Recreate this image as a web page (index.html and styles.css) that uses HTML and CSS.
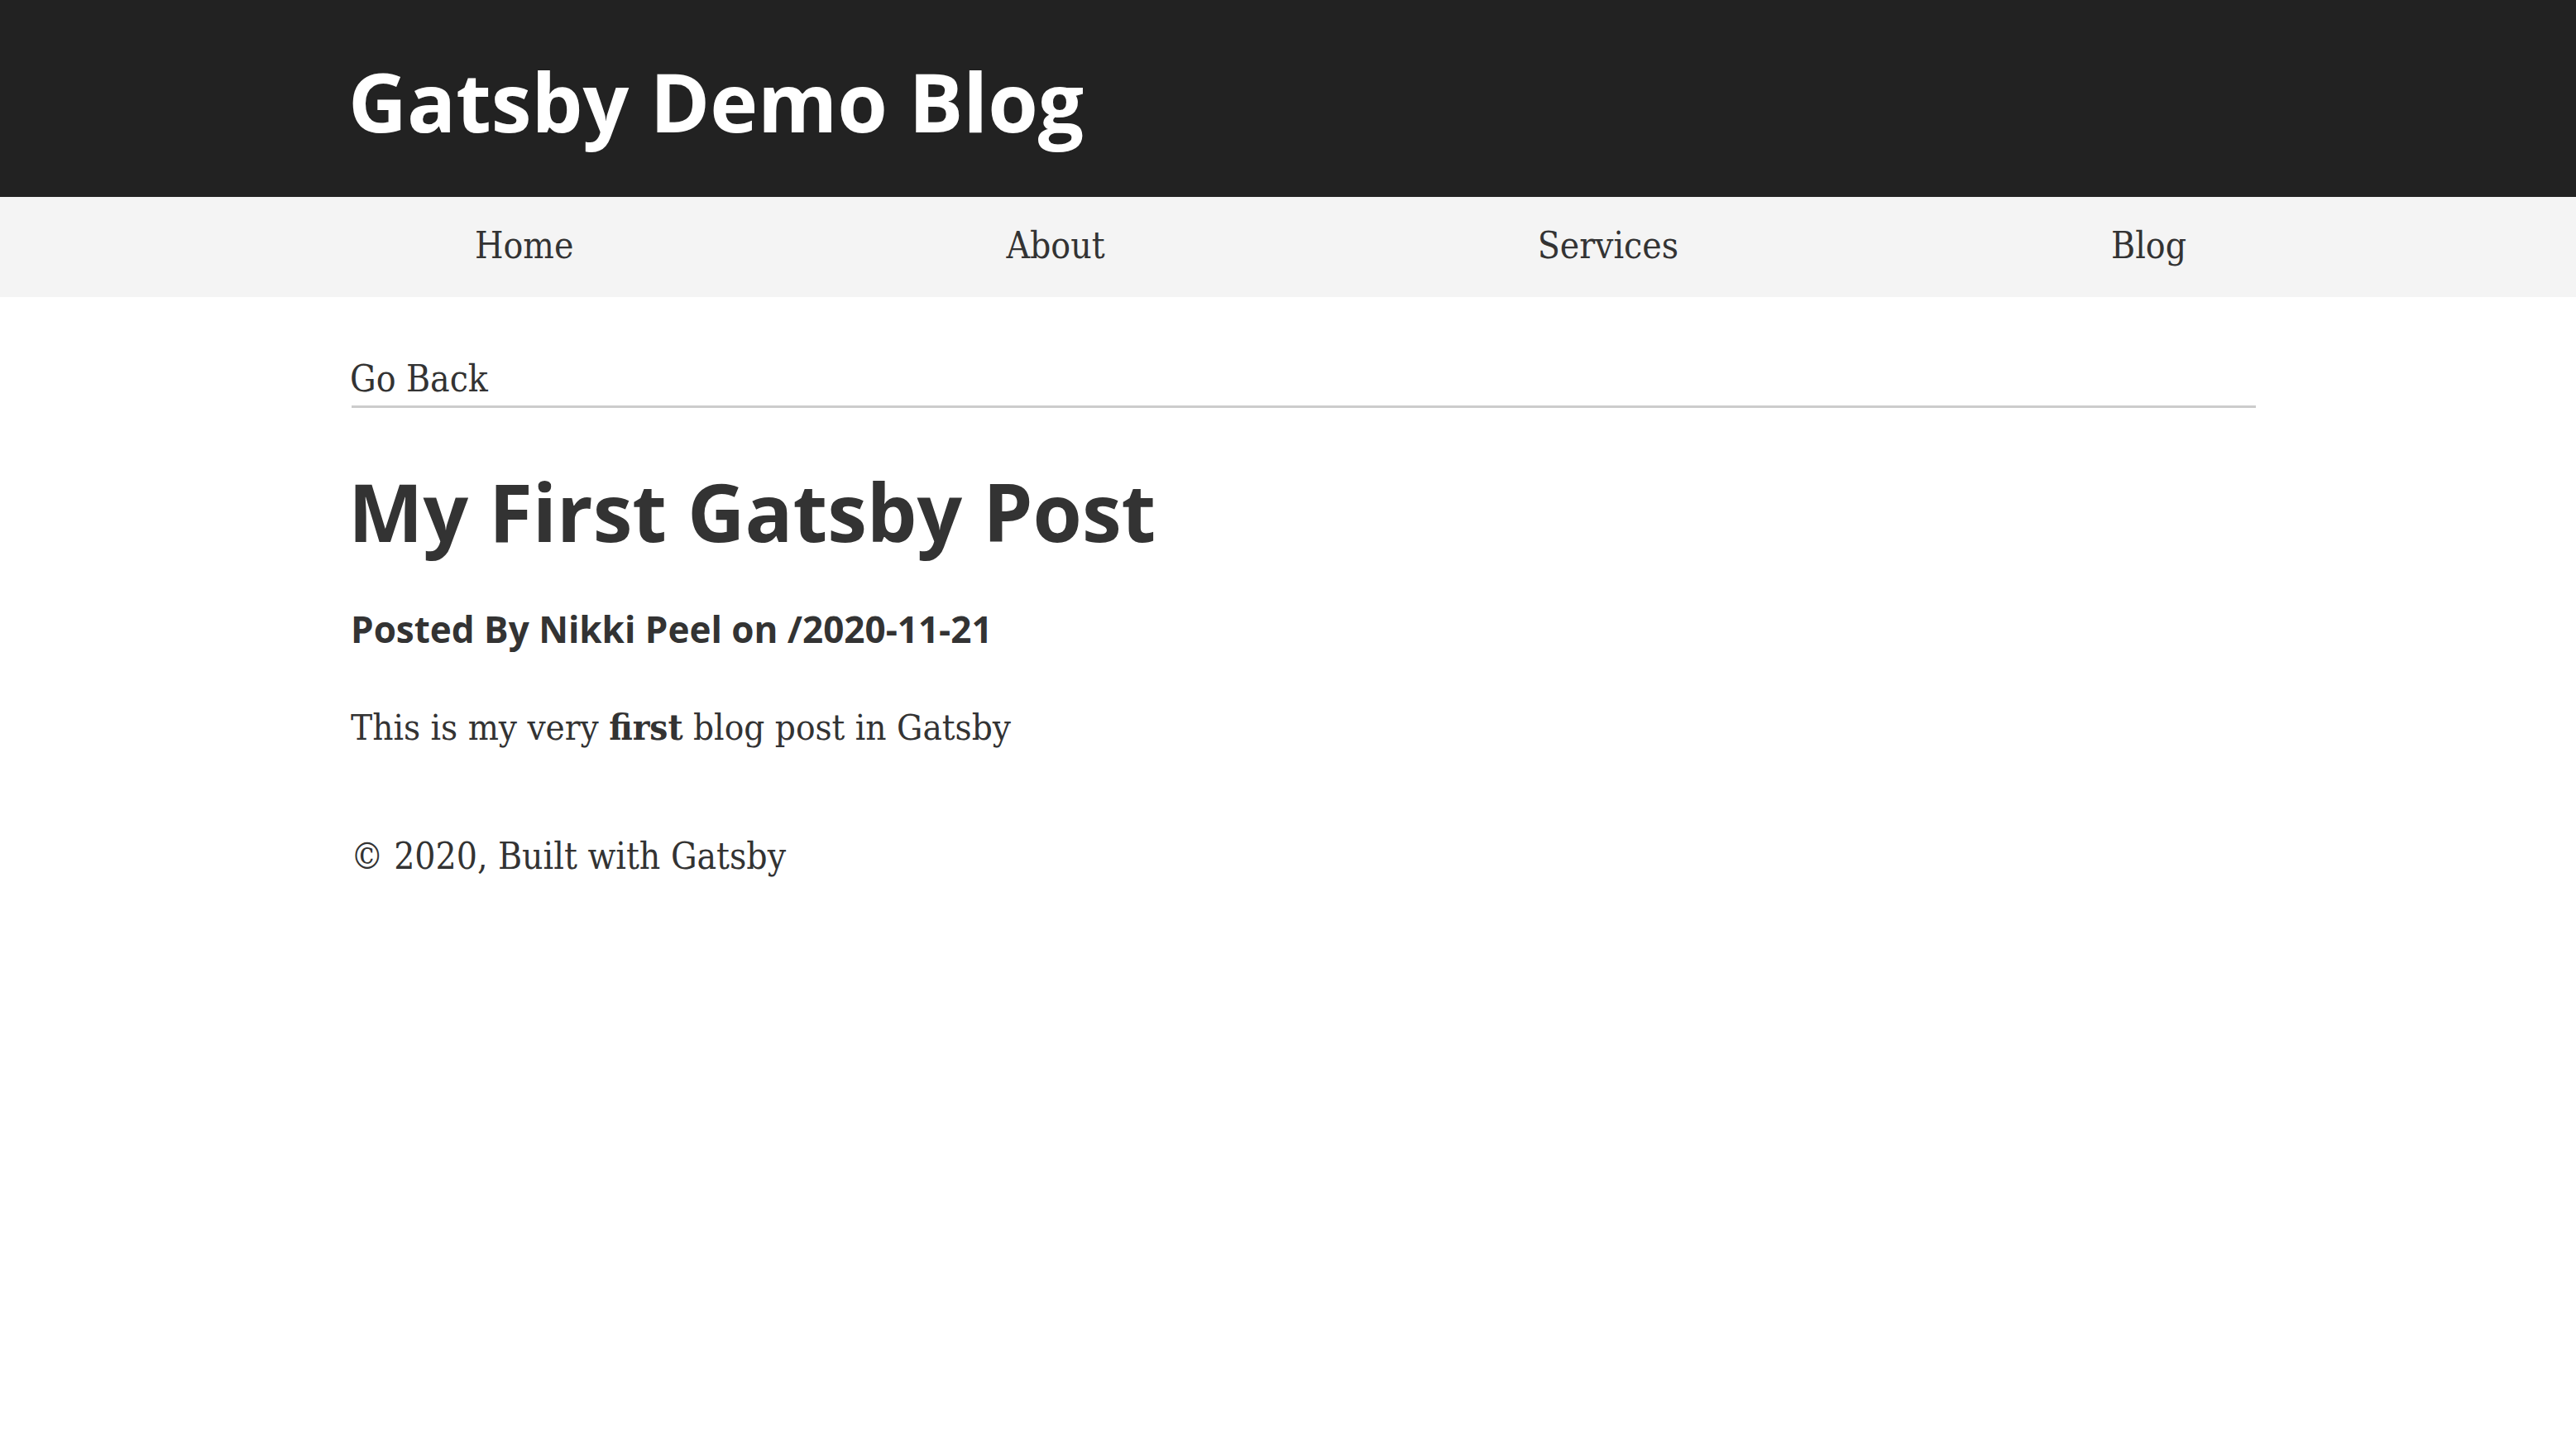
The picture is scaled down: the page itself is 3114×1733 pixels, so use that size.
FILE: index.html
```html
<!DOCTYPE html>
<html lang="en">
<head>
<meta charset="utf-8">
<title>Gatsby Demo Blog</title>
<link rel="stylesheet" href="styles.css">
</head>
<body>
<header class="site-header">
  <div class="container">
    <h1 class="site-title">Gatsby Demo Blog</h1>
  </div>
</header>
<nav class="site-nav">
  <div class="container">
    <ul class="nav-list">
      <li><a href="#">Home</a></li>
      <li><a href="#">About</a></li>
      <li><a href="#">Services</a></li>
      <li><a href="#">Blog</a></li>
    </ul>
  </div>
</nav>
<main class="container content">
  <div class="back-row"><a href="#" class="back-link">Go Back</a></div>
  <h1 class="post-title">My First Gatsby Post</h1>
  <h4 class="post-meta">Posted By Nikki Peel on /2020-11-21</h4>
  <p class="post-body">This is my very <strong>first</strong> blog post in Gatsby</p>
  <footer class="site-footer">© 2020, Built with Gatsby</footer>
</main>
</body>
</html>
```
FILE: styles.css
```css
html, body {
  margin: 0;
  padding: 0;
  background: #ffffff;
}
body {
  font-family: "DejaVu Serif Condensed", "DejaVu Serif", "Liberation Serif", serif;
  font-size: 44px;
  color: #333333;
}
a {
  color: #333333;
  text-decoration: none;
}
.container {
  width: 2302px;
  margin-left: 425px;
}
.site-header {
  background: #222222;
  padding: 73px 0 66px;
}
.site-title {
  margin: 0 0 0 -4px;
  font-family: "Open Sans", "Noto Sans", sans-serif;
  font-weight: 700;
  font-size: 98px;
  line-height: 99px;
  color: #ffffff;
}
.site-nav {
  background: #f4f4f4;
  padding: 33px 0 37px;
}
.nav-list {
  list-style: none;
  margin: 0;
  padding: 0 84px 0 149px;
  display: flex;
  justify-content: space-between;
  line-height: 51px;
}
.back-row {
  margin-top: 66px;
  line-height: 65px;
  border-bottom: 3px solid #cccccc;
}
.back-link {
  margin-left: -2px;
}
.post-title {
  margin: 76px 0 0 -4px;
  font-family: "Open Sans", "Noto Sans", sans-serif;
  font-weight: 700;
  font-size: 96px;
  line-height: 97px;
}
.post-meta {
  margin: 64px 0 0 -1px;
  font-family: "Open Sans", "Noto Sans", sans-serif;
  font-weight: 700;
  font-size: 44px;
  line-height: 60px;
}
.post-body {
  margin: 56px 0 0 -1px;
  line-height: 66px;
  font-size: 43.6px;
}
.site-footer {
  margin-top: 90px;
  line-height: 66px;
  margin-left: -1px;
}
```
